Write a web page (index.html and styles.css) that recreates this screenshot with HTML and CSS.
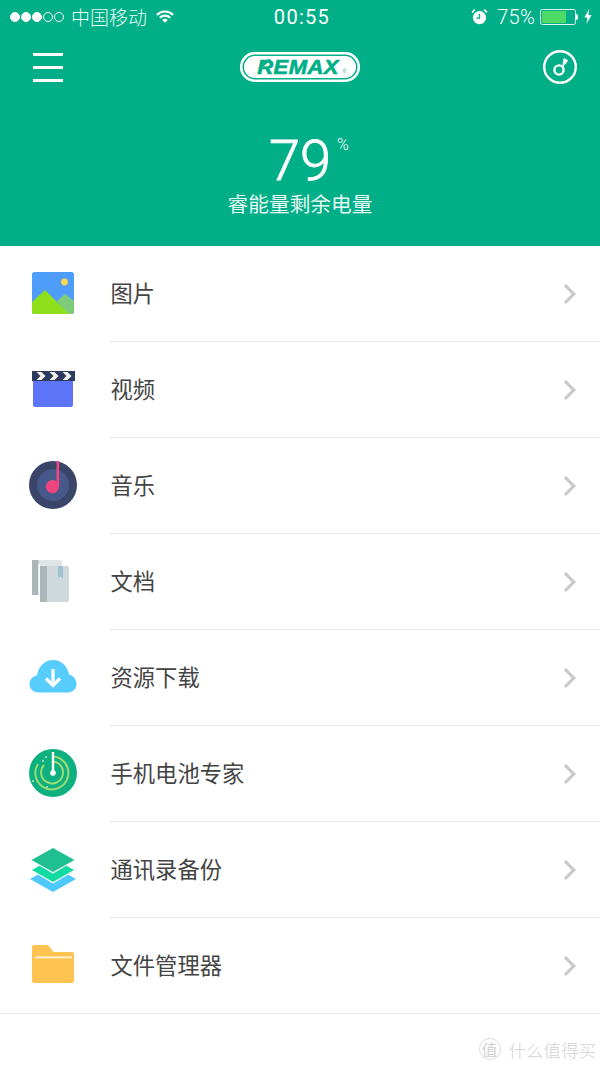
FILE: index.html
```html
<!DOCTYPE html>
<html lang="zh">
<head>
<meta charset="utf-8">
<title>REMAX</title>
<link rel="stylesheet" href="styles.css">
</head>
<body>
<div class="page">
  <header class="hero">
    <div class="status">
      <div class="status-left">
        <span class="dots"><i class="dot on"></i><i class="dot on"></i><i class="dot on"></i><i class="dot"></i><i class="dot"></i></span>
        <span class="carrier">中国移动</span>
        <svg class="wifi" width="18" height="14" viewBox="0 0 20 15"><path d="M1 5.200a12.600 12.600 0 0 1 18 0" fill="none" stroke="#fff" stroke-width="2.400"/><path d="M4.200 8.400a8.200 8.200 0 0 1 11.600 0" fill="none" stroke="#fff" stroke-width="2.400"/><path d="M6.900 10.900 10 14l3.100-3.100a4.400 4.400 0 0 0-6.200 0z" fill="#fff"/></svg>
      </div>
      <div class="clock">00:55</div>
      <div class="status-right">
        <svg class="alarm" width="17" height="17" viewBox="0 0 16 16"><circle cx="8" cy="9" r="6.200" fill="#fff"/><path d="M8 5.500V9.500H5" fill="none" stroke="#00af87" stroke-width="1.300"/><path d="M1 4.200 3.600 1.600M15 4.200 12.400 1.600" stroke="#fff" stroke-width="1.600"/></svg>
        <span class="pct">75%</span>
        <span class="battery"><span class="battery-fill"></span></span>
        <span class="battery-tip"></span>
        <svg class="bolt" width="8" height="15" viewBox="0 0 8 15"><path d="M5.200 0 .4 8.400h3L2.400 15l5.200-9H4.400z" fill="#fff"/></svg>
      </div>
    </div>
    <div class="nav">
      <div class="burger"><i></i><i></i><i></i></div>
      <div class="logo">
        <svg class="logo-leaf" width="10" height="7" viewBox="0 0 10 7"><path d="M0 7C1 3 4 .5 10 0 8 3 5 5 3 7z" fill="#00af87"/></svg>
        <span class="logo-text">REMAX</span><span class="logo-reg">®</span>
      </div>
      <svg class="disc" width="36" height="36" viewBox="0 0 36 36"><circle cx="18" cy="18" r="15.800" fill="none" stroke="#fff" stroke-width="2.400"/><circle cx="17" cy="21" r="4.600" fill="none" stroke="#fff" stroke-width="2.400"/><path d="M20.600 18.500 22 9.500l3.500 2-2.200 3.500" fill="#fff" stroke="#fff" stroke-width="1"/></svg>
    </div>
    <div class="charge">
      <div class="charge-value"><span class="charge-num">79</span><span class="charge-unit">%</span></div>
      <div class="charge-label">睿能量剩余电量</div>
    </div>
  </header>

  <ul class="list">
    <li class="row">
      <span class="icon"><svg width="44" height="44" viewBox="0 0 44 44"><rect x="1" y="1" width="42" height="42" rx="2.500" fill="#4f9dfb"/><circle cx="33.500" cy="11" r="3.400" fill="#fdd94f"/><path d="M26 30 34 23 43 30V41a2 2 0 0 1-2 2H36z" fill="#7ecb7a"/><path d="M1 31 14 19 38 43H3.500A2.500 2.500 0 0 1 1 40.500z" fill="#8fe01a"/></svg></span>
      <span class="name">图片</span><span class="chev"></span>
    </li>
    <li class="row">
      <span class="icon"><svg width="44" height="44" viewBox="0 0 44 44"><path d="M2 12H42V38a2 2 0 0 1-2 2H4a2 2 0 0 1-2-2z" fill="#5d74f9"/><rect x="1" y="4" width="43" height="10" fill="#2b3a5e"/><path d="M5.500 5h5l4 4-4 4h-5l4-4zM18.500 5h5l4 4-4 4h-5l4-4zM31.500 5h5l4 4-4 4h-5l4-4z" fill="#f4f2ea"/></svg></span>
      <span class="name">视频</span><span class="chev"></span>
    </li>
    <li class="row">
      <span class="icon"><svg width="48" height="48" viewBox="0 0 48 48"><circle cx="24" cy="24" r="24" fill="#3a4569"/><circle cx="24" cy="24" r="16" fill="#47598a"/><path d="M27.500 0h2.600v25.500h-.1a6.600 6.600 0 1 1-2.500-5.100z" fill="#f0447f"/></svg></span>
      <span class="name">音乐</span><span class="chev"></span>
    </li>
    <li class="row">
      <span class="icon"><svg width="44" height="44" viewBox="0 0 44 44"><path d="M1 1H29a2 2 0 0 1 2 2V36H1z" fill="#dfe5e7"/><rect x="1" y="1" width="6.500" height="35" fill="#abb6b8"/><path d="M7.500 5.500H9V43H7.500z" fill="#fff"/><path d="M9 7H36a2 2 0 0 1 2 2V41a2 2 0 0 1-2 2H9z" fill="#cfd9dd"/><rect x="9" y="7" width="7" height="36" fill="#abb6b8"/><path d="M27 7h5V19l-2.500-1.500L27 19z" fill="#9fc3d2"/></svg></span>
      <span class="name">文档</span><span class="chev"></span>
    </li>
    <li class="row">
      <span class="icon"><svg width="48" height="36" viewBox="0 0 48 36"><path d="M10 33.500C4 33.500 .5 29.500.5 25c0-4.500 3.300-8 7.500-8.500C9.500 7 16 1 24 1c8 0 14.500 5.500 16 14.500 4.500 1 7.500 5 7.500 9.500 0 4.800-3.500 8.500-9 8.500z" fill="#56cdfc"/><path d="M24 10V26M17 19.500l7 7 7-7" fill="none" stroke="#fff" stroke-width="3.200"/></svg></span>
      <span class="name">资源下载</span><span class="chev"></span>
    </li>
    <li class="row">
      <span class="icon"><svg width="48" height="48" viewBox="0 0 48 48"><circle cx="24" cy="24" r="24" fill="#0fb07f"/><path d="M24 7.500A16.500 16.500 0 1 1 9 15" fill="none" stroke="#9adb74" stroke-width="2"/><path d="M15 16a11 11 0 1 0 9-3.500" fill="none" stroke="#9adb74" stroke-width="2"/><path d="M24 3V24" stroke="#fff" stroke-width="2.400"/><circle cx="24" cy="24" r="2.800" fill="#fff"/><circle cx="14" cy="12" r="1" fill="#b6e8c8"/><circle cx="17" cy="8" r="1" fill="#b6e8c8"/><circle cx="4" cy="32" r="1" fill="#b6e8c8"/><circle cx="18" cy="38" r="1" fill="#b6e8c8"/></svg></span>
      <span class="name">手机电池专家</span><span class="chev"></span>
    </li>
    <li class="row">
      <span class="icon"><svg width="46" height="46" viewBox="0 0 46 46"><path d="M23 20 46 33 23 46 0 33z" fill="#4fc9fb"/><path d="M23 12 45 24.500 23 37.500 1 24.500z" fill="#fff"/><path d="M23 12 44 24 23 36 2 24z" fill="#10dba3"/><path d="M23 2 45.500 14.500 23 27.500 .5 14.500z" fill="#fff"/><path d="M23 2 44.500 14 23 26 1.500 14z" fill="#20bf92"/></svg></span>
      <span class="name">通讯录备份</span><span class="chev"></span>
    </li>
    <li class="row row-last">
      <span class="icon"><svg width="44" height="40" viewBox="0 0 44 40"><path d="M1 2a2 2 0 0 1 2-2H17l5.500 7H41a2 2 0 0 1 2 2V36a2 2 0 0 1-2 2H3a2 2 0 0 1-2-2z" fill="#fec351"/><rect x="4" y="11.500" width="37" height="1.800" fill="#fff3d8"/></svg></span>
      <span class="name">文件管理器</span><span class="chev"></span>
    </li>
  </ul>

  <div class="mark">
    <span class="mark-seal">值</span>
    <span class="mark-text">什么值得买</span>
  </div>
</div>
</body>
</html>
```

FILE: styles.css
```css
* { box-sizing: border-box; }
html, body { margin: 0; padding: 0; background: #fff; }
body { font-family: "Liberation Sans", "Noto Sans CJK SC", sans-serif; }
.page { position: relative; width: 600px; height: 1067px; overflow: hidden; }

.hero { height: 246px; background: #00af87; color: #fff; }
.status { position: relative; height: 33px; display: flex; align-items: center; justify-content: space-between; padding: 0 8px 0 10px; }
.status-left, .status-right { display: flex; align-items: center; }
.dots { display: flex; gap: 1px; }
.dot { width: 10px; height: 10px; border-radius: 50%; border: 1px solid #fff; }
.dot.on { background: #fff; }
.carrier { margin-left: 7px; font-size: 19px; font-family: "Noto Sans CJK SC", sans-serif; font-weight: 300; opacity: .92; }
.wifi { margin-left: 9px; }
.clock { position: absolute; left: 4px; right: 0; text-align: center; font-family: Roboto, sans-serif; font-size: 20px; letter-spacing: 1.300px; }
.alarm { margin-right: 9px; }
.pct { font-family: Roboto, sans-serif; font-weight: 300; font-size: 20px; letter-spacing: .3px; margin-right: 5px; }
.battery { width: 36px; height: 16px; border: 1px solid #dff5ee; border-radius: 2.500px; padding: 1px; display: block; }
.battery-fill { display: block; width: 75%; height: 100%; background: #4cd964; }
.battery-tip { width: 2px; height: 6px; background: #fff; margin-right: 6px; border-radius: 0 2px 2px 0; }
.bolt { display: block; }

.nav { display: flex; align-items: center; justify-content: space-between; height: 68px; padding: 0 22px 0 33px; }
.burger { display: flex; flex-direction: column; gap: 10px; width: 30px; }
.burger i { display: block; height: 3px; background: #fff; }
.logo { position: relative; width: 120px; height: 30px; margin-left: -6px; padding-right: 3px; border-radius: 15px; background: #fff; box-shadow: inset 0 0 0 2.500px #fff, inset 0 0 0 4px #00af87; display: flex; align-items: center; justify-content: center; }
.logo-leaf { position: absolute; left: 21px; top: 7px; }
.logo-text { color: #00af87; font-size: 20px; font-weight: 700; font-style: italic; letter-spacing: .4px; transform: scaleX(1.100); -webkit-text-stroke: .6px #00af87; }
.logo-reg { position: absolute; left: 103px; top: 16px; color: #00af87; font-size: 5px; line-height: 7px; }

.charge { text-align: center; padding-top: 39px; margin-top: -1px; }
.charge-value { height: 44px; position: relative; display: inline-block; vertical-align: top; }
.charge-num { font-family: Roboto, sans-serif; font-weight: 300; font-size: 56px; line-height: 44px; display: block; -webkit-text-stroke: .8px #fff; }
.charge-unit { position: absolute; left: 100%; top: -4px; line-height: 20px; margin-left: 6px; font-size: 16px; font-family: Roboto, sans-serif; font-weight: 300; }
.charge-label { font-family: "Noto Sans CJK SC", sans-serif; font-size: 20.700px; font-weight: 400; line-height: 30px; margin-top: 5px; opacity: .9; }

.list { list-style: none; margin: 0; padding: 0; }
.row { position: relative; height: 96px; display: flex; align-items: center; padding: 0 27px 2px 29px; }
.row::after { content: ""; position: absolute; left: 110px; right: 0; bottom: 0; height: 1px; background: #e8e8e8; }
.row-last::after { left: 0; }
.icon { width: 48px; flex: none; display: flex; align-items: center; justify-content: center; }
.icon svg { display: block; }
.name { flex: 1; margin-left: 33.500px; margin-top: -2px; font-family: "Noto Sans CJK SC", sans-serif; font-size: 22.300px; font-weight: 400; color: #444; }
.chev { width: 14px; height: 14px; margin-top: 2px; border-top: 3px solid #c8c8c8; border-right: 3px solid #c8c8c8; transform: rotate(45deg); }

.mark { position: absolute; right: 4px; bottom: 5px; display: flex; align-items: center; gap: 8px; color: #d2d2d2; font-family: "Noto Sans CJK SC", sans-serif; }
.mark-seal { width: 22px; height: 22px; margin-bottom: 2px; border-radius: 50%; border: 1px solid #ddd; font-size: 16px; line-height: 20px; text-align: center; }
.mark-text { font-size: 17.500px; font-weight: 300; }
```
